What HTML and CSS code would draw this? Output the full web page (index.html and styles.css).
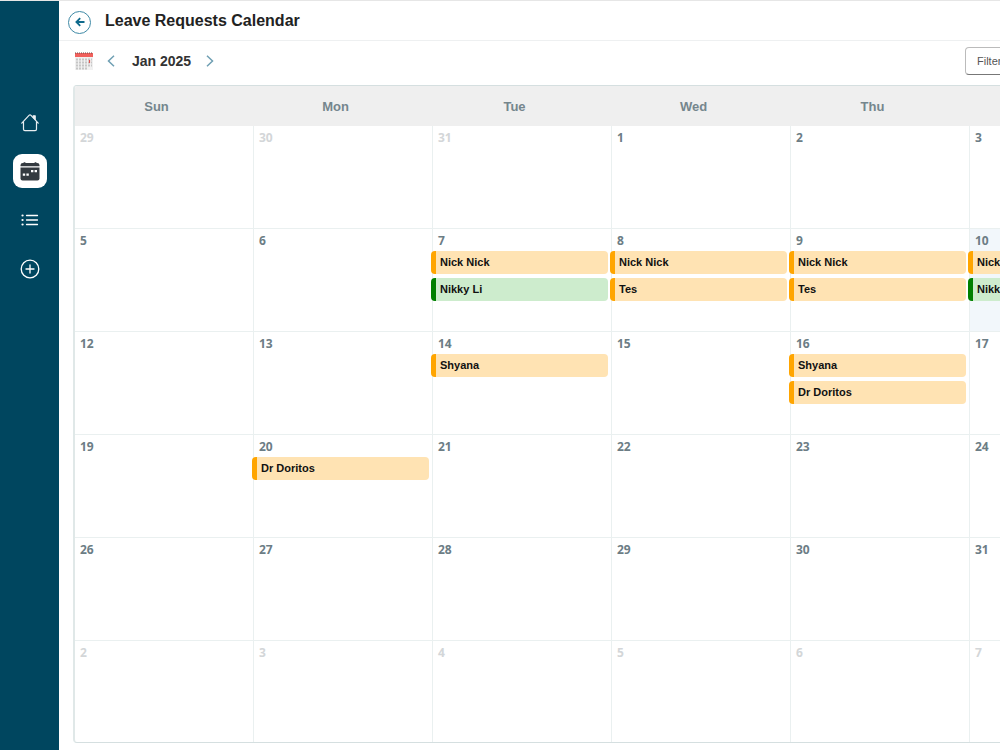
FILE: index.html
```html
<!DOCTYPE html>
<html lang="en">
<head>
  <meta charset="UTF-8" />
  <meta name="viewport" content="width=device-width, initial-scale=1.0"/>
  <title>Leave Requests Calendar</title>
  <link rel="stylesheet" href="styles.css">
</head>
<body>
  <nav class="sidebar">
    <a href="#" aria-label="Home">
      <svg width="20" height="20" viewBox="0 0 20 20" fill="none" stroke="#e8eef1" stroke-width="1.2" stroke-linejoin="round" stroke-linecap="round">
        <path d="M1.8 11.2L9 3.4q1-1 2 0l7.2 7.8M3.5 10v7.2q0 1.4 1.4 1.4h10.2q1.4 0 1.4-1.4V10"/>
        <path d="M13.2 5V3.8h2v3.6z" fill="#fff"/>
      </svg>
    </a>
    <a href="#" class="active" aria-label="Calendar">
      <svg width="20" height="20" viewBox="0 0 20 20" fill="#343a40">
        <path d="M3.6 1.2h1.8V2h9.2v-.8h1.8V2h.8q2.3 0 2.3 2.3v.9H.5v-.9Q.5 2 2.8 2h.8z"/>
        <path d="M.5 6.6h19v10.9a2 2 0 0 1-2 2h-15a2 2 0 0 1-2-2z"/>
        <path d="M11 9h2.4v2.2H11zM14.6 9H17v2.2h-2.4zM2.8 12.6h2.4v2.2H2.8zM6.4 12.6h2.4v2.2H6.4z" fill="#fff"/>
      </svg>
    </a>
    <a href="#" aria-label="Requests">
      <svg width="20" height="20" viewBox="0 0 20 20" fill="none" stroke="#fff" stroke-width="1.3" stroke-linecap="round">
        <path d="M6.5 5.5h11M6.5 10h11M6.5 14.5h11"/>
        <path d="M2.5 5.5h.1M2.5 10h.1M2.5 14.5h.1" stroke-width="2.2"/>
      </svg>
    </a>
    <a href="#" aria-label="Add request">
      <svg width="20" height="20" viewBox="0 0 20 20" fill="none" stroke="#fff" stroke-width="1.3" stroke-linecap="round">
        <circle cx="10" cy="10" r="8.8"/>
        <path d="M10 6v8M6 10h8"/>
      </svg>
    </a>
  </nav>

  <main class="main">
    <header class="page-header">
      <a href="#" class="back" aria-label="Back">
        <svg width="10" height="10" viewBox="0 0 10 10" fill="none" stroke="#0f6a8c" stroke-width="1.8">
          <path d="M9.5 5H2M5.2 1.2L1.4 5l3.8 3.8"/>
        </svg>
      </a>
      <h1>Leave Requests Calendar</h1>
    </header>

    <div class="content">
      <div class="toolbar">
        <svg width="18" height="18" viewBox="0 0 18 18">
          <path d="M0 1h18v17H0z" fill="#f1f1f1"/>
          <path d="M0 1h18v4H0z" fill="#f0605c"/>
          <path d="M0 1h18" stroke="#6e4a4a" stroke-width="1.2" stroke-dasharray="1 1"/>
          <path d="M1 7.5h16M1 10.5h16M1 13.5h16M1 16.5h11" stroke="#c6c6c6" stroke-width="2" stroke-dasharray="2 1"/>
          <path d="M14.5 8v3" stroke="#e0524e" stroke-width="1.2"/>
        </svg>
        <button class="arrow prev" aria-label="Previous month">
          <svg width="8" height="12" viewBox="0 0 8 12" fill="none" stroke="#6f9fb3" stroke-width="1.5"><path d="M7 .8L1.5 6 7 11.2"/></svg>
        </button>
        <h2>Jan 2025</h2>
        <button class="arrow next" aria-label="Next month">
          <svg width="8" height="12" viewBox="0 0 8 12" fill="none" stroke="#6f9fb3" stroke-width="1.5"><path d="M1 .8L6.5 6 1 11.2"/></svg>
        </button>
        <button class="filter">Filters</button>
      </div>

      <div class="calendar">
        <table>
          <thead>
            <tr><th>Sun</th><th>Mon</th><th>Tue</th><th>Wed</th><th>Thu</th><th>Fri</th><th>Sat</th></tr>
          </thead>
          <tbody id="days"></tbody>
        </table>
      </div>
    </div>
  </main>

  <script>
    const today = 10;
    const requests = {
      7: [["Nick Nick", "pending"], ["Nikky Li", "approved"]],
      8: [["Nick Nick", "pending"], ["Tes", "pending"]],
      9: [["Nick Nick", "pending"], ["Tes", "pending"]],
      10: [["Nick Nick", "pending"], ["Nikky Li", "approved"]],
      14: [["Shyana", "pending"]],
      16: [["Shyana", "pending"], ["Dr Doritos", "pending"]],
      20: [["Dr Doritos", "pending"]]
    };

    const days = document.getElementById("days");

    // Six weeks, starting on Sunday 29 December
    for (let week = 0; week < 6; week++) {
      const row = document.createElement("tr");
      for (let d = 0; d < 7; d++) {
        const date = new Date(2024, 11, 29 + week * 7 + d);
        const day = date.getDate();
        const inMonth = date.getMonth() === 0;
        const cell = document.createElement("td");
        if (!inMonth) cell.className = "other";
        if (inMonth && day === today) cell.className = "today";

        const events = inMonth && requests[day] ? requests[day] : [];
        cell.innerHTML = `<div class="date">${day}</div>` +
          events.map(([name, status]) => `<div class="event ${status}">${name}</div>`).join("");
        row.appendChild(cell);
      }
      days.appendChild(row);
    }
  </script>
</body>
</html>
```

FILE: styles.css
```css
* { box-sizing: border-box; }
body { margin: 0; display: flex; min-height: 100vh; font-family: "Liberation Sans", Arial, sans-serif; background: #fff; border-top: 1px solid #e6e6e6; overflow-x: hidden; }
h1, h2 { margin: 0; font-weight: bold; }
button { font-family: inherit; cursor: pointer; }

.sidebar { flex: none; width: 59px; padding-top: 104px; background: #00465f; display: flex; flex-direction: column; align-items: center; gap: 15px; }
.sidebar a { width: 34px; height: 34px; border-radius: 9px; display: flex; align-items: center; justify-content: center; }
.sidebar a.active { background: #fff; }

.main { flex: 1; min-width: 0; overflow: hidden; }
.page-header { height: 40px; padding: 0 9px; display: flex; align-items: center; gap: 14px; border-bottom: 1px solid #eef0f1; }
.page-header h1 { font-size: 16px; color: #222; }
.back { width: 23px; height: 23px; margin-top: 3px; border: 1px solid #3f8aa6; border-radius: 50%; display: flex; align-items: center; justify-content: center; }

.content { min-width: 1286px; padding: 0 16px 8px 14px; }
.toolbar { height: 44px; padding-left: 2px; padding-bottom: 4px; display: flex; align-items: center; }
.toolbar h2 { font-size: 14px; color: #333; }
.arrow { width: 24px; height: 24px; padding: 0; border: none; background: none; display: flex; align-items: center; justify-content: center; }
.prev { margin: 0 9px 0 6px; }
.next { margin-left: 7px; }
.filter { width: 364px; height: 28px; margin-left: auto; padding: 0 11px; font-size: 11px; text-align: left; color: #555; background: #fff; border: 1px solid #bbb; border-bottom-color: #777; border-radius: 4px; }

.calendar { border: 1px solid #d5dfe0; border-left: 2px solid #e0e8e8; border-radius: 4px; overflow: hidden; }
table { width: 100%; table-layout: fixed; border-collapse: separate; border-spacing: 0; }
th { height: 40px; padding: 0 16px 0 0; background: #efefef; font-size: 13px; color: #75868d; }
td { height: 103px; padding: 4px 0 0; vertical-align: top; border-right: 1px solid #eaf0f0; border-bottom: 1px solid #eaf0f0; }
td:last-child { border-right: none; }
tr:last-child td { height: 101px; border-bottom: none; }
.date { padding-left: 5px; font: bold 12px/16px "Open Sans", sans-serif; color: #6c7d85; }
.other .date { color: #d3d6d8; }
.today { background: #f2f7fb; }

.event { height: 23px; margin: 4px 3px 0 -2px; padding-left: 4px; border-left: 5px solid; border-radius: 4px; font-size: 11px; font-weight: bold; line-height: 23px; color: #111; }
.date + .event { margin-top: 2px; }
.event.pending { background: #ffe3b3; border-left-color: orange; }
.event.approved { background: #cdeccd; border-left-color: green; }
```
